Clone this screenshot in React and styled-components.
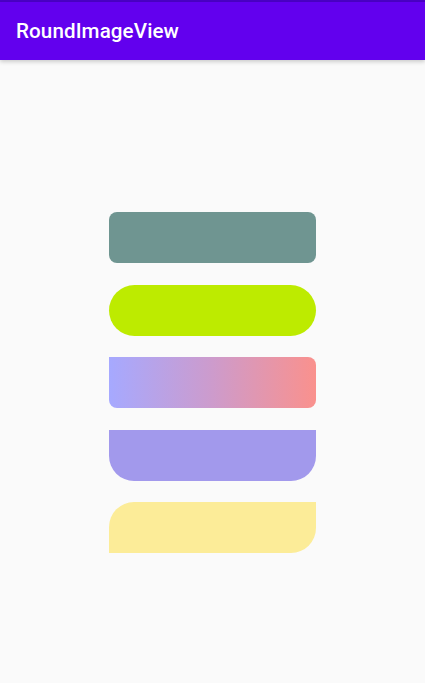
import styled, { createGlobalStyle } from "styled-components";

const GlobalStyle = createGlobalStyle`
  html, body {
    margin: 0;
    padding: 0;
    background: #fafafa;
    font-family: Roboto, "Noto Sans", sans-serif;
  }
`;

const shapes = [
  { key: "plain", bg: "#6f9591", radius: "8px" },
  { key: "pill", bg: "#bdeb00", radius: "26px" },
  {
    key: "gradient",
    bg: "linear-gradient(90deg, #a6a9ff 0%, #cd9bcc 50%, #fa918d 100%)",
    radius: "0 8px 8px 8px",
  },
  { key: "bottom", bg: "#a299ec", radius: "0 0 25px 25px" },
  { key: "diagonal", bg: "#fcec98", radius: "25px 0 25px 0" },
];

const App = () => {
  return (
    <Page>
      <GlobalStyle />
      <StatusStrip />
      <Toolbar>
        <Title>RoundImageView</Title>
      </Toolbar>
      <Content>
        {shapes.map((s) => (
          <Shape key={s.key} $bg={s.bg} $radius={s.radius} />
        ))}
      </Content>
    </Page>
  );
};

const Page = styled.div`
  width: 425px;
  min-height: 683px;
  background: #fafafa;
  display: flex;
  flex-direction: column;
`;

const StatusStrip = styled.div`
  height: 2px;
  background: #4a00c4;
`;

const Toolbar = styled.header`
  height: 58px;
  background: #6200ee;
  display: flex;
  align-items: center;
  padding: 0 16px;
  box-shadow: 0 2px 4px rgba(0, 0, 0, 0.18);
  position: relative;
  z-index: 1;
`;

const Title = styled.h1`
  margin: 0;
  color: #ffffff;
  font-family: Roboto, "Noto Sans", sans-serif;
  font-weight: 500;
  font-size: 20.6px;
  letter-spacing: 0.1px;
`;

const Content = styled.main`
  display: flex;
  flex-direction: column;
  align-items: flex-start;
  gap: 21.5px;
  padding-top: 152px;
  padding-left: 109px;
`;

const Shape = styled.div`
  width: 207px;
  height: 51px;
  background: ${(p) => p.$bg};
  border-radius: ${(p) => p.$radius};
`;

export default App;
